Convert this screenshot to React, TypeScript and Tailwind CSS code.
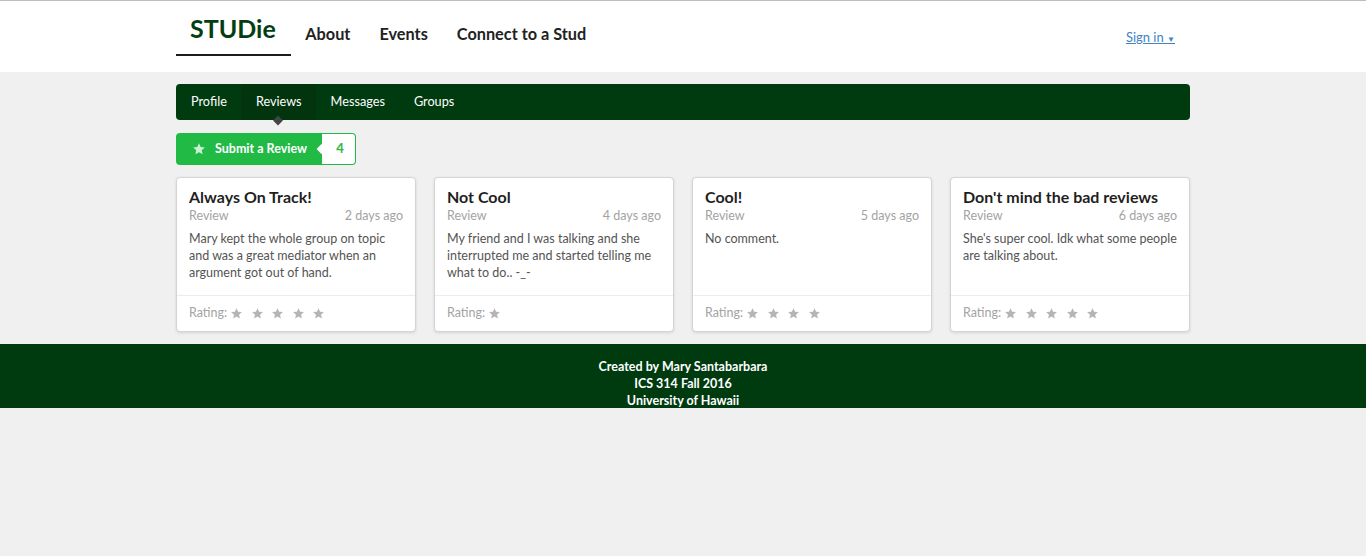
import React from "react";

const Star = ({ className = "" }: { className?: string }) => (
  <svg viewBox="0 0 24 24" className={className} fill="currentColor">
    <path d="M12 2.2l2.95 6.5 7.05.75-5.3 4.75 1.5 6.95L12 17.6l-6.2 3.55 1.5-6.95L2 9.45l7.05-.75z" />
  </svg>
);

const reviews = [
  {
    title: "Always On Track!",
    time: "2 days ago",
    text: "Mary kept the whole group on topic and was a great mediator when an argument got out of hand.",
    stars: 5,
  },
  {
    title: "Not Cool",
    time: "4 days ago",
    text: "My friend and I was talking and she interrupted me and started telling me what to do.. -_-",
    stars: 1,
  },
  { title: "Cool!", time: "5 days ago", text: "No comment.", stars: 4 },
  {
    title: "Don't mind the bad reviews",
    time: "6 days ago",
    text: "She's super cool. Idk what some people are talking about.",
    stars: 5,
  },
];

export default function App() {
  return (
    <div
      className="min-h-[556px] bg-[#f1f0f0]"
      style={{ fontFamily: "Lato, 'Open Sans', Arial, sans-serif" }}
    >
      {/* Header */}
      <div className="bg-white border-t border-[#bdbdbd]">
        <div className="mx-auto w-[1014px] flex items-end justify-between pt-[1px] pb-[16px]">
          <div className="flex items-end">
            <div className="pl-[14px] pr-[15px] pt-[13px] pb-[13px] border-b-2 border-[#1b1c1d] text-[25px] leading-[26px] font-bold text-[#053d12]">
              STUDie
            </div>
            <div className="px-[14.5px] pb-[12px] text-[16.3px] leading-[16px] font-bold text-[#222] border-b-2 border-transparent">
              About
            </div>
            <div className="px-[14.5px] pb-[12px] text-[16.3px] leading-[16px] font-bold text-[#222] border-b-2 border-transparent">
              Events
            </div>
            <div className="px-[14.5px] pb-[12px] text-[16.3px] leading-[16px] font-bold text-[#222] border-b-2 border-transparent">
              Connect to a Stud
            </div>
          </div>
          <div className="pr-[15px] pb-[10px] text-[13px] leading-[14px] text-[#4183c4] underline">
            Sign in <span className="text-[8px] align-middle">▼</span>
          </div>
        </div>
      </div>

      {/* Content */}
      <div className="mx-auto w-[1014px] pt-[12px]">
        <div className="flex h-[36px] bg-[#003b10] rounded-[4px] text-[12.7px] text-white">
          <div className="pl-[15px] pr-[14px] flex items-center">Profile</div>
          <div className="relative pl-[15px] pr-[14px] flex items-center bg-[#02350e]">
            Reviews
            <div className="absolute left-1/2 -bottom-[4px] w-[7px] h-[7px] -translate-x-1/2 rotate-45 bg-[#444]" />
          </div>
          <div className="pl-[15px] pr-[14px] flex items-center">Messages</div>
          <div className="pl-[15px] pr-[14px] flex items-center">Groups</div>
        </div>

        <div className="mt-[13px] flex">
          <div className="flex h-[32px] items-center bg-[#21ba45] rounded-l-[4px] pl-[16px] pr-[15px] text-white text-[12.5px] font-bold">
            <Star className="w-[14px] h-[14px] text-[#c9f0d2] mr-[9px]" />
            Submit a Review
          </div>
          <div className="relative flex h-[32px] w-[34px] items-center justify-center bg-white border border-[#21ba45] border-l-0 rounded-r-[4px] text-[#21ba45] text-[13px] font-bold">
            <div className="absolute -left-[4px] top-1/2 w-[7px] h-[7px] -translate-y-1/2 rotate-45 bg-white" />
            <span className="relative pl-[3px]">4</span>
          </div>
        </div>

        <div className="mt-[12px] grid grid-cols-4 gap-[18px]">
          {reviews.map((r) => (
            <div
              key={r.title}
              className="flex flex-col bg-white rounded-[4px] border border-[#d4d4d5] shadow-[0_1px_3px_0_#d4d4d5]"
            >
              <div className="flex-1 px-[12px] pt-[9px] pb-[14px]">
                <div className="text-[16px] leading-[20px] font-bold text-[#1f1f1f]">{r.title}</div>
                <div className="mt-[1px] flex justify-between text-[12.5px] leading-[16px] text-[#a3a3a3]">
                  <span>Review</span>
                  <span>{r.time}</span>
                </div>
                <div className="mt-[6px] text-[12.5px] leading-[17px] text-[#545454]">{r.text}</div>
              </div>
              <div className="h-[36px] border-t border-[#ececec] px-[12px] flex items-center text-[12.5px] text-[#a3a3a3]">
                <span className="mr-[3px]">Rating:</span>
                {Array.from({ length: r.stars }).map((_, i) => (
                  <Star key={i} className="w-[13px] h-[13px] text-[#b5b5b5] mr-[7.5px]" />
                ))}
              </div>
            </div>
          ))}
        </div>
      </div>

      {/* Footer */}
      <div className="mt-[12px] h-[64px] bg-[#003b10] pt-[14px] text-center text-white text-[12.5px] leading-[17px] font-bold">
        <div>Created by Mary Santabarbara</div>
        <div>ICS 314 Fall 2016</div>
        <div>University of Hawaii</div>
      </div>
    </div>
  );
}
